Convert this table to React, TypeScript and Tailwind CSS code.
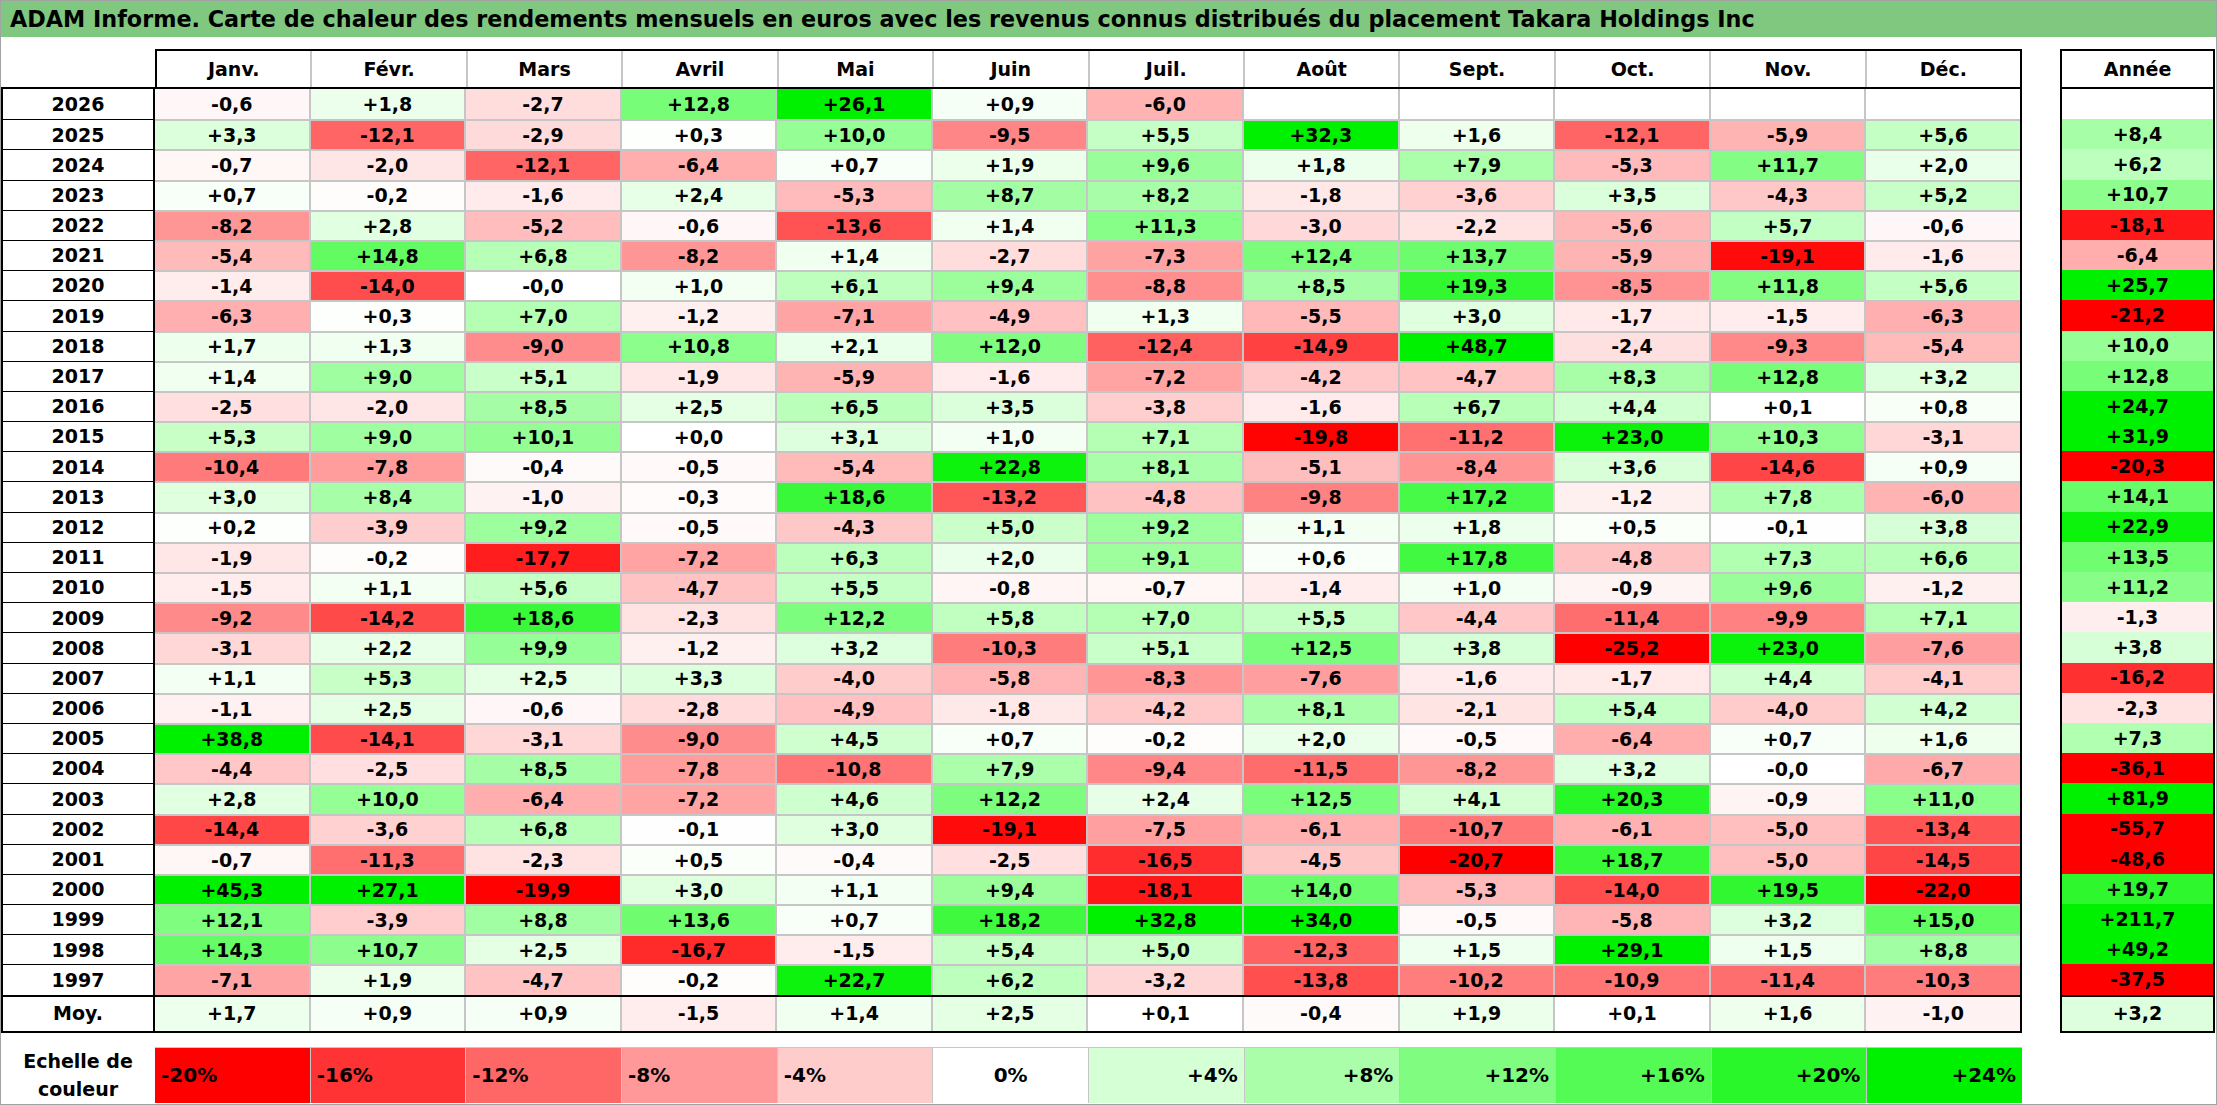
import React from "react";

const MONTHS = ["Janv.", "Févr.", "Mars", "Avril", "Mai", "Juin", "Juil.", "Août", "Sept.", "Oct.", "Nov.", "Déc."];

// year | 12 months | année ("_" = empty cell)
const RAW: string[] = [
	"2026|-0,6 +1,8 -2,7 +12,8 +26,1 +0,9 -6,0 _ _ _ _ _|_",
	"2025|+3,3 -12,1 -2,9 +0,3 +10,0 -9,5 +5,5 +32,3 +1,6 -12,1 -5,9 +5,6|+8,4",
	"2024|-0,7 -2,0 -12,1 -6,4 +0,7 +1,9 +9,6 +1,8 +7,9 -5,3 +11,7 +2,0|+6,2",
	"2023|+0,7 -0,2 -1,6 +2,4 -5,3 +8,7 +8,2 -1,8 -3,6 +3,5 -4,3 +5,2|+10,7",
	"2022|-8,2 +2,8 -5,2 -0,6 -13,6 +1,4 +11,3 -3,0 -2,2 -5,6 +5,7 -0,6|-18,1",
	"2021|-5,4 +14,8 +6,8 -8,2 +1,4 -2,7 -7,3 +12,4 +13,7 -5,9 -19,1 -1,6|-6,4",
	"2020|-1,4 -14,0 -0,0 +1,0 +6,1 +9,4 -8,8 +8,5 +19,3 -8,5 +11,8 +5,6|+25,7",
	"2019|-6,3 +0,3 +7,0 -1,2 -7,1 -4,9 +1,3 -5,5 +3,0 -1,7 -1,5 -6,3|-21,2",
	"2018|+1,7 +1,3 -9,0 +10,8 +2,1 +12,0 -12,4 -14,9 +48,7 -2,4 -9,3 -5,4|+10,0",
	"2017|+1,4 +9,0 +5,1 -1,9 -5,9 -1,6 -7,2 -4,2 -4,7 +8,3 +12,8 +3,2|+12,8",
	"2016|-2,5 -2,0 +8,5 +2,5 +6,5 +3,5 -3,8 -1,6 +6,7 +4,4 +0,1 +0,8|+24,7",
	"2015|+5,3 +9,0 +10,1 +0,0 +3,1 +1,0 +7,1 -19,8 -11,2 +23,0 +10,3 -3,1|+31,9",
	"2014|-10,4 -7,8 -0,4 -0,5 -5,4 +22,8 +8,1 -5,1 -8,4 +3,6 -14,6 +0,9|-20,3",
	"2013|+3,0 +8,4 -1,0 -0,3 +18,6 -13,2 -4,8 -9,8 +17,2 -1,2 +7,8 -6,0|+14,1",
	"2012|+0,2 -3,9 +9,2 -0,5 -4,3 +5,0 +9,2 +1,1 +1,8 +0,5 -0,1 +3,8|+22,9",
	"2011|-1,9 -0,2 -17,7 -7,2 +6,3 +2,0 +9,1 +0,6 +17,8 -4,8 +7,3 +6,6|+13,5",
	"2010|-1,5 +1,1 +5,6 -4,7 +5,5 -0,8 -0,7 -1,4 +1,0 -0,9 +9,6 -1,2|+11,2",
	"2009|-9,2 -14,2 +18,6 -2,3 +12,2 +5,8 +7,0 +5,5 -4,4 -11,4 -9,9 +7,1|-1,3",
	"2008|-3,1 +2,2 +9,9 -1,2 +3,2 -10,3 +5,1 +12,5 +3,8 -25,2 +23,0 -7,6|+3,8",
	"2007|+1,1 +5,3 +2,5 +3,3 -4,0 -5,8 -8,3 -7,6 -1,6 -1,7 +4,4 -4,1|-16,2",
	"2006|-1,1 +2,5 -0,6 -2,8 -4,9 -1,8 -4,2 +8,1 -2,1 +5,4 -4,0 +4,2|-2,3",
	"2005|+38,8 -14,1 -3,1 -9,0 +4,5 +0,7 -0,2 +2,0 -0,5 -6,4 +0,7 +1,6|+7,3",
	"2004|-4,4 -2,5 +8,5 -7,8 -10,8 +7,9 -9,4 -11,5 -8,2 +3,2 -0,0 -6,7|-36,1",
	"2003|+2,8 +10,0 -6,4 -7,2 +4,6 +12,2 +2,4 +12,5 +4,1 +20,3 -0,9 +11,0|+81,9",
	"2002|-14,4 -3,6 +6,8 -0,1 +3,0 -19,1 -7,5 -6,1 -10,7 -6,1 -5,0 -13,4|-55,7",
	"2001|-0,7 -11,3 -2,3 +0,5 -0,4 -2,5 -16,5 -4,5 -20,7 +18,7 -5,0 -14,5|-48,6",
	"2000|+45,3 +27,1 -19,9 +3,0 +1,1 +9,4 -18,1 +14,0 -5,3 -14,0 +19,5 -22,0|+19,7",
	"1999|+12,1 -3,9 +8,8 +13,6 +0,7 +18,2 +32,8 +34,0 -0,5 -5,8 +3,2 +15,0|+211,7",
	"1998|+14,3 +10,7 +2,5 -16,7 -1,5 +5,4 +5,0 -12,3 +1,5 +29,1 +1,5 +8,8|+49,2",
	"1997|-7,1 +1,9 -4,7 -0,2 +22,7 +6,2 -3,2 -13,8 -10,2 -10,9 -11,4 -10,3|-37,5",
];
const AVG = "+1,7 +0,9 +0,9 -1,5 +1,4 +2,5 +0,1 -0,4 +1,9 +0,1 +1,6 -1,0".split(" ");
const AVG_YEAR = "+3,2";

const LEGEND = [-20, -16, -12, -8, -4, 0, 4, 8, 12, 16, 20, 24];

type Row = { year: string; months: string[]; total: string };

const ROWS: Row[] = RAW.map((line) => {
	const [year, months, total] = line.split("|");
	return {
		year,
		months: months.split(" ").map((m) => (m === "_" ? "" : m)),
		total: total === "_" ? "" : total,
	};
});

// red to -20, green to +24, white at zero
function heat(text: string | number): string {
	if (text === "") return "#ffffff";
	const v = typeof text === "number" ? text : parseFloat(text.replace(",", "."));
	if (v < 0) {
		const t = Math.min(-v / 20, 1);
		const c = Math.round(255 * (1 - t));
		return `rgb(255,${c},${c})`;
	}
	const t = Math.min(v / 24, 1);
	const c = Math.round(255 * (1 - t));
	const g = Math.round(255 - 14 * t * t * t);
	return `rgb(${c},${g},${c})`;
}

const font = "font-['DejaVu_Sans',sans-serif] font-bold text-black";

const Cell: React.FC<{ value: string; first: boolean; top: boolean }> = ({ value, first, top }) => (
	<div
		className={`flex-1 min-w-0 flex items-center justify-center text-[19px] ${first ? "" : "border-l-2 border-[#c6c6c6]"} ${top ? "border-t-2 border-[#c6c6c6]" : ""}`}
		style={{ backgroundColor: heat(value) }}
	>
		{value}
	</div>
);

export default function App() {
	return (
		<div className={`w-[2217px] h-[1105px] border border-[#a3a3a3] bg-white overflow-hidden ${font}`}>
			<div className="h-[36px] bg-[#80c87f] flex items-center pl-[9px] text-[22.3px] leading-none">
				ADAM Informe. Carte de chaleur des rendements mensuels en euros avec les revenus connus distribués du placement Takara Holdings Inc
			</div>

			<div className="flex mt-[12px]">
				{/* main table */}
				<div className="w-[2021px] flex flex-col">
					<div className="flex h-[38px]">
						<div className="w-[154px]" />
						<div className="flex-1 flex border-t-2 border-l-2 border-r-2 border-black">
							{MONTHS.map((m, i) => (
								<div
									key={m}
									className={`flex-1 min-w-0 flex items-center justify-center text-[19px] ${i === 0 ? "" : "border-l-2 border-[#c6c6c6]"}`}
								>
									{m}
								</div>
							))}
						</div>
					</div>
					<div className="border-2 border-black flex flex-col">
						{ROWS.map((r, ri) => (
							<div key={r.year} className="flex h-[30.2px]">
								<div
									className={`w-[152px] shrink-0 border-r-2 border-black flex items-center justify-center text-[19px] ${ri === 0 ? "" : "border-t border-[#e4e4e4]"}`}
								>
									{r.year}
								</div>
								{r.months.map((v, i) => (
									<Cell key={i} value={v} first={i === 0} top={ri !== 0} />
								))}
							</div>
						))}
						<div className="flex h-[36px] border-t-2 border-black">
							<div className="w-[152px] shrink-0 border-r-2 border-black flex items-center justify-center text-[19px]">
								Moy.
							</div>
							{AVG.map((v, i) => (
								<Cell key={i} value={v} first={i === 0} top={false} />
							))}
						</div>
					</div>
				</div>

				{/* yearly column */}
				<div className="w-[155px] ml-[38px] flex flex-col">
					<div className="h-[38px] border-t-2 border-l-2 border-r-2 border-black flex items-center justify-center text-[19px]">
						Année
					</div>
					<div className="border-2 border-black flex flex-col">
						{ROWS.map((r) => (
							<div key={r.year} className="flex h-[30.2px]">
								<Cell value={r.total} first top={false} />
							</div>
						))}
						<div className="flex h-[36px] border-t-2 border-black">
							<Cell value={AVG_YEAR} first top={false} />
						</div>
					</div>
				</div>
			</div>

			{/* colour scale */}
			<div className="flex mt-[14px] h-[56px] w-[2021px]">
				<div className="w-[154px] flex flex-col items-center justify-center text-[19px] leading-[28px]">
					<span>Echelle de</span>
					<span>couleur</span>
				</div>
				<div className="flex-1 flex border-t border-[#c6c6c6]">
					{LEGEND.map((v, i) => (
						<div
							key={v}
							className={`flex-1 min-w-0 flex items-center text-[20px] px-[6px] ${i === 0 ? "" : "border-l border-[#c6c6c6]"} ${v < 0 ? "justify-start" : v === 0 ? "justify-center" : "justify-end"}`}
							style={{ backgroundColor: heat(v) }}
						>
							{v > 0 ? `+${v}%` : `${v}%`}
						</div>
					))}
				</div>
			</div>
		</div>
	);
}
